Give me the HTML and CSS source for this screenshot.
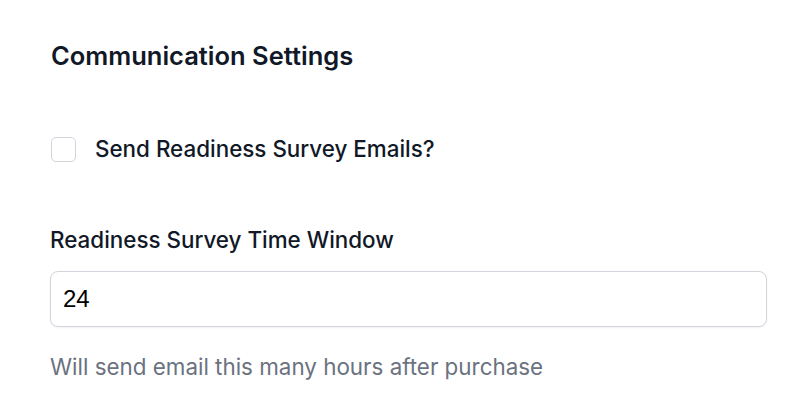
FILE: index.html
```html
<!DOCTYPE html>
<html lang="en">
<head>
    <meta charset="UTF-8">
    <meta name="viewport" content="width=device-width, initial-scale=1.0">
    <title>Communication Settings</title>
    <link rel="stylesheet" href="styles.css">
</head>
<body>
    <!-- Communication settings section -->
    <section class="settings">
        <h2 class="settings-title">Communication Settings</h2>

        <label class="check-row">
            <input type="checkbox" class="check-box">
            <span class="check-label">Send Readiness Survey Emails?</span>
        </label>

        <div class="field">
            <label class="field-label" for="time-window">Readiness Survey Time Window</label>
            <input type="text" id="time-window" class="input-field" value="24">
            <p class="field-help">Will send email this many hours after purchase</p>
        </div>
    </section>
</body>
</html>
```

FILE: styles.css
```css
body {
    font-family: Inter, "Noto Sans", sans-serif;
    background-color: white;
    color: #111827;
    margin: 0;
}
.settings {
    padding: 38px 31px 0 50px;
}
.settings-title {
    font-size: 25.5px;
    font-weight: 600;
    line-height: 35px;
    margin: 0 0 59px 1px;
}
.check-row {
    display: flex;
    align-items: center;
    gap: 19px;
    margin-left: 1px;
}
.check-box {
    appearance: none;
    width: 25px;
    height: 25px;
    margin: 0;
    border: 1px solid #d1d5db;
    border-radius: 5px;
    background: white;
}
.check-label {
    font-size: 22.4px;
    font-weight: 500;
    line-height: 34px;
}
.field {
    margin-top: 57px;
}
.field-label {
    display: block;
    font-size: 22.4px;
    font-weight: 500;
    line-height: 34px;
    margin-bottom: 14px;
}
.input-field {
    box-sizing: border-box;
    width: 100%;
    height: 56px;
    padding: 0 12px;
    border: 1.5px solid #d1d5db;
    border-radius: 8px;
    font-family: "Liberation Sans", Arial, sans-serif;
    font-size: 24px;
    color: #000;
    box-shadow: 0 1px 2px rgba(0, 0, 0, 0.05);
    outline: none;
}
.field-help {
    margin: 23px 0 0;
    font-size: 22.4px;
    line-height: 34px;
    color: #6b7280;
}
```
